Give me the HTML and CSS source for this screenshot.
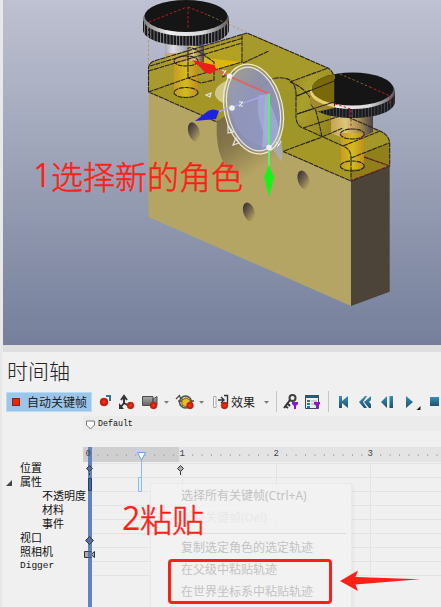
FILE: index.html
```
<!DOCTYPE html>
<html lang="zh-CN">
<head>
<meta charset="utf-8">
<title>时间轴</title>
<link rel="stylesheet" href="styles.css">
</head>
<body>
<div class="app">
<main class="viewport">
<svg class="scene" width="438" height="345" viewBox="3 0 438 345">
<defs>
<linearGradient id="sky" x2="0" y2="1"><stop stop-color="#bec1d1"/><stop offset=".35" stop-color="#a5abbe"/><stop offset="1" stop-color="#757f9b"/></linearGradient>
<linearGradient id="metal"><stop stop-color="#aaa9b1"/><stop offset=".2" stop-color="#dedee2"/><stop offset=".65" stop-color="#9695a3"/><stop offset=".8" stop-color="#303650"/><stop offset="1" stop-color="#65678a"/></linearGradient>
<linearGradient id="brass"><stop stop-color="#c2a550"/><stop offset=".35" stop-color="#dcc678"/><stop offset=".7" stop-color="#a2874d"/><stop offset="1" stop-color="#46414d"/></linearGradient>
<linearGradient id="pin"><stop stop-color="#c99c1c"/><stop offset=".5" stop-color="#d2bb20"/><stop offset="1" stop-color="#c18d1c"/></linearGradient>
<linearGradient id="bore" x1="0" y1="0" x2=".55" y2="1"><stop stop-color="#746846"/><stop offset=".45" stop-color="#85754a"/><stop offset=".9" stop-color="#b5a564"/></linearGradient>
<linearGradient id="hole" x1=".2" y1=".1" x2=".6" y2="1"><stop stop-color="#3d3635"/><stop offset=".45" stop-color="#70634b"/><stop offset="1" stop-color="#b9a966"/></linearGradient>
<linearGradient id="glass" x1="0" y1="0" x2=".7" y2="1"><stop stop-color="#aaa889"/><stop offset=".45" stop-color="#8d90b3"/><stop offset="1" stop-color="#8c94c7"/></linearGradient>
<linearGradient id="fold" x2="1" y2=".5"><stop stop-color="#98891c"/><stop offset=".35" stop-color="#aaa12c"/><stop offset="1" stop-color="#90821a"/></linearGradient>
<linearGradient id="rim"><stop stop-color="#77777c"/><stop offset=".3" stop-color="#f0f0f1"/><stop offset=".7" stop-color="#d9d9dc"/><stop offset="1" stop-color="#555"/></linearGradient>
<pattern id="knurl" width="3.2" height="20" patternUnits="userSpaceOnUse"><rect width="3.2" height="20" fill="#17171a"/><rect width=".9" height="20" fill="#85858a"/></pattern>
<pattern id="knurl-dark" width="3.2" height="20" patternUnits="userSpaceOnUse"><rect width="3.2" height="20" fill="#1b1c20"/><rect width=".8" height="20" fill="#4b4c52"/></pattern>
<clipPath id="behind"><path d="M300 60H334.5V108Q315 112 300 116Z"/></clipPath>
</defs>
<rect x="3" width="438" height="345" fill="url(#sky)"/>
<path d="M148.5 91L220 116 283 144 351 180V306L148.5 217Z" fill="#b5a564"/>
<path d="M351 180L389.7 165V291.7L351 306Z" fill="#4c4339"/>
<path d="M165 40H204V65Q185 72 165 64Z" fill="url(#metal)"/>
<path d="M148.5 92V68Q149 63 154 61L247 33 260 38 327 68Q334 71 334.5 80V108L380 131Q389.5 135 389.7 143V166L351 181 283 151.5 217 122Z" fill="#a49628"/>
<path d="M148.5 92V68Q149 63 154 61L192 49 215 60V80L188 78Z" fill="#a89a2c"/>
<path d="M247 33L260 38 328 68 293 82Q289 78 283 78L235 61 204 53Z" fill="#a69a2b"/>
<path d="M204 49L243 37V62L212 72Z" fill="#b3a222"/>
<path d="M204 58L242 62 216 70 204 69Z" fill="#dcb80c"/>
<path d="M293 82L328 68Q334 72 334.5 80V108L343 124 322 137 296 118Z" fill="url(#fold)"/>
<path d="M148.5 92L188 78 217 83 245 91 217 122Z" fill="#a49527"/>
<path d="M296 110Q296 124 303 128L322 137 283 151.5 277 118V88L296 93Z" fill="#9f9628"/>
<path d="M322 137L343 146 351 158V181L283 151.5Z" fill="#a69827"/>
<path d="M351 158L389.7 143V166L351 181Z" fill="#91801a"/>
<path d="M165 53H204V58Q203 64 186 65Q169 64 165 57Z" fill="#cba843" opacity=".75"/>
<path d="M188 46H204V62L188 65Z" fill="url(#brass)"/>
<path d="M174 61H198V92A12 5 0 0 1 174 92Z" fill="url(#pin)"/>
<path d="M331 112H373V132Q352 144 331 133Z" fill="url(#brass)"/>
<path d="M341 133H364V166A12 5 0 0 1 341 166Z" fill="url(#pin)"/>
<g fill="none" stroke="#28232c" stroke-width="1.1" stroke-dasharray="5 .7">
<path d="M148.5 92V68Q149 63 154 61L247 33 328 68Q334 72 334.5 80V108"/>
<path d="M150 66L243 38M148.5 71L242 43M148.5 92L188 78 242 62V34M148.5 92L217 122 245 112M188 78V48Q192 47 198 51L214 62V80L201 83 188 78M222 77L240 70M243 63L269 51"/>
<path d="M260 88Q272 76 283 78Q295 79 296 93V118Q297 126 303 128L343 146Q351 149 351 158V181L389.7 166V143Q389 135 380 131L343 115M290 82Q307 88 314 105Q318 117 322 137L283 151.5 351 181M296 96L334 81M297 114L334 102M290 82L328 68M303 128L343 115M322 137L343 128M343 146L380 131M351 158L389 143M364 157L390 166"/>
<ellipse cx="186" cy="61" rx="12" ry="5"/><ellipse cx="186" cy="92.5" rx="12" ry="5"/><ellipse cx="352.3" cy="134" rx="12" ry="5"/><ellipse cx="352.3" cy="166" rx="12" ry="5"/>
</g>
<path d="M143 20V31C148 50 224 51 229 31V20Z" fill="url(#knurl)"/>
<ellipse cx="186" cy="19" rx="43" ry="17" fill="url(#rim)"/><ellipse cx="186" cy="16" rx="41.5" ry="16" fill="#151515"/>
<path d="M310 92V103C315 123 390 123 395 103V92Z" fill="url(#knurl-dark)"/>
<ellipse cx="352.5" cy="91.5" rx="42.5" ry="17.5" fill="url(#rim)"/><ellipse cx="352.5" cy="89" rx="41" ry="16.5" fill="#151515"/>
<g clip-path="url(#behind)"><path d="M310 92V103Q320 118 340 119V80Z" fill="#a38a32"/><ellipse cx="352.5" cy="91.5" rx="42.5" ry="17.5" fill="#e8d06c"/><ellipse cx="352.5" cy="89" rx="41" ry="16.5" fill="#796909"/></g>
<path d="M334.5 79V106M297 96L334 81M297 114L334 102" fill="none" stroke="#28232c"/>
<g fill="none" stroke-dasharray="2.5 2"><path d="M149 22L187 7M188 7V29M188 7L208 15" stroke="#b81d1d"/><path d="M148.5 22V66M208 15L246 32M340 74L370 87" stroke="#b8824e" opacity=".65"/><path d="M370 87L390 96V105M335 104L351 109V116" stroke="#ca1a21"/><path d="M351 110V130M351 180L389 166 366 157" stroke="#a82a2c"/></g>
<path d="M217 121C214 160 230 184 260 184Q273 184 282 160L283 151 245 104Z" fill="url(#bore)"/>
<g fill="url(#hole)"><ellipse cx="194" cy="132" rx="5.6" ry="10" transform="rotate(-18 194 132)"/><ellipse cx="249" cy="212" rx="5.6" ry="9.7" transform="rotate(-18 249 212)"/><ellipse cx="303.5" cy="180" rx="5.6" ry="9.7" transform="rotate(-18 303.5 180)"/></g>
<path d="M229 80Q214 85 215 95Q217 102 227 104Z" fill="#d1c78b"/>
<ellipse cx="253.5" cy="109" rx="28" ry="44" transform="rotate(-13 253.5 109)" fill="url(#glass)" fill-opacity=".93"/>
<path d="M229 80L269 94V147Q239 145 231 112Z" fill="#949bc4" opacity=".55"/>
<path d="M259 95Q252 125 282 162V145Q279 119 266 95Z" fill="#a3b4dc" opacity=".6"/>
<path d="M265 97L269 94V146L262 148Z" fill="#aab2df" opacity=".7"/>
<g fill="none" stroke="#eee9c6"><ellipse cx="253.5" cy="109" rx="29" ry="45.5" transform="rotate(-13 253.5 109)" stroke-width="1.3"/><ellipse cx="253.5" cy="109" rx="26" ry="42.5" transform="rotate(-13 253.5 109)" stroke-width="1.2"/></g>
<path d="M206 95L211 93 210 97ZM228 126V133L233 132ZM236 138L233 145 239 143Z" fill="none" stroke="#e2e2e8" stroke-width="1.2"/>
<path d="M269 94L211 68" stroke="#ed5b62" stroke-width="1.7"/><path d="M192 60L214 65 217 70 210 74Q204 73 201 68Z" fill="#ed2018"/>
<path d="M269 94L215 113" stroke="#a9a5ec" stroke-width="1.5"/><path d="M195 121L208 111Q213 108 219 111L216 119Z" fill="#2020df"/>
<path d="M269 94V180" stroke="#54f463" stroke-width="2"/><path d="M269 165L274 177 269 197 264 177Z" fill="#18f219"/>
<g fill="#eeeef6"><circle cx="229.5" cy="76" r="2.7"/><circle cx="232" cy="108" r="2.8"/><circle cx="269" cy="147.5" r="2.8"/></g>
<path d="M222 70L226 72M226 70L223 75M239 102H243L239 106H243M276 142L279 145 281 141M279 145L277 147" stroke="#eee" fill="none"/>
</svg>
<p class="note note-select"><span class="digit">1</span>选择新的角色</p>
</main>
<section class="timeline">
<h1>时间轴</h1>
<div class="toolbar">
<button class="auto"><i></i>自动关键帧</button>
<svg class="tools" width="140" height="22" viewBox="93 391 140 22">
<defs><radialGradient id="dot"><stop stop-color="#ff351b"/><stop offset="1" stop-color="#b61200"/></radialGradient><linearGradient id="camera" x2="0" y2="1"><stop stop-color="#aaa"/><stop offset="1" stop-color="#636363"/></linearGradient></defs>
<path d="M106 396H110V401" fill="none" stroke="#2f7797" stroke-width="2"/>
<path d="M124 404V397M121 400L124 396 127 400M124 403L131 407M124 403L120 408" stroke="#343434" stroke-width="2" fill="none"/><path d="M119 403V409H124Z" fill="#343434"/>
<path d="M142.5 396.5H153V405.5H142.5ZM153 399L157 396.5V405H153Z" fill="url(#camera)" stroke="#4d4d4d"/>
<circle cx="185.5" cy="402" r="6" fill="#d8d1a8" stroke="#505050" stroke-width="1.5"/><path d="M180 395L176 399M178 401H194M179 396L190 407" stroke="#4c4c4c" stroke-width="1.3"/><path d="M182 400L186 398 190 400V405L186 407 182 405Z" fill="#eabd19" stroke="#786525"/>
<path d="M213.5 396.5H216V407.5H213.5Z" fill="#fff" stroke="#aaa"/><path d="M218 400H224M221 397L224 400 221 403M224 395.5H227.5V404" fill="none" stroke="#333" stroke-width="1.4"/>
<g fill="url(#dot)" stroke="#b72a16" stroke-width=".5"><circle cx="104" cy="402" r="4"/><circle cx="130.5" cy="405.5" r="3.4"/><circle cx="153.5" cy="405.5" r="3.4"/><circle cx="190" cy="405.5" r="3.4"/><circle cx="224.5" cy="405.5" r="3.4"/></g>
<path d="M164 401H169L166.5 403.8ZM199 401H204L201.5 403.8Z" fill="#777"/>
</svg>
<span class="effect">效果</span>
<svg class="tools" width="180" height="22" viewBox="261 391 180 22">
<defs><linearGradient id="play" x2="0" y2="1"><stop stop-color="#398fbb"/><stop offset="1" stop-color="#1b516b"/></linearGradient></defs>
<path d="M264 401H269L266.5 403.8Z" fill="#777"/><path d="M276.5 391V412M328.5 391V412" stroke="#c5c5c5"/>
<circle cx="292.5" cy="398" r="3" fill="none" stroke="#414141" stroke-width="2"/><path d="M290 400L284 408M287 403L290 406M285 406L288 408" stroke="#333" stroke-width="2"/>
<path d="M305.5 396H318.5V408.5H305.5Z" fill="#eee" stroke="#3d4a53"/><path d="M305 395H319V398H305Z" fill="#195e83"/><path d="M307 401H310M307 404H310M307 407H310" stroke="#26769b" stroke-width="2"/><path d="M311 401H317M311 404H316" stroke="#aaa"/>
<path d="M292 402H298V404L296 406V409H294V406L292 404ZM314 402H320V404L318 406V409H316V406L314 404Z" fill="#8e15d5"/>
<g fill="url(#play)"><path d="M339 396H342V401L348 396V408L342 403V408H339Z"/><path d="M365 396H367L363 402 367 408H364L359 402ZM371 396V400L369 402 371 404V408H369L364 402Z"/><path d="M387 396V408L381 402ZM389.5 396H393V408H389.5Z"/><path d="M406 396L413 402 406 408Z"/><path d="M430 397H439V406H430Z"/></g><path d="M420.5 406V410H416.5Z" fill="#222"/>
</svg>
</div>
<div class="track"><svg width="10" height="10"><path d="M.5 1H8.5V5L4.5 9 .5 5Z" fill="#fff" stroke="#777"/></svg><span>Default</span></div>
<div class="body">
<ul class="labels"><li>位置</li><li class="group"><svg width="7" height="7"><path d="M6 0V6H0Z" fill="#444"/></svg>属性</li><li class="child">不透明度</li><li class="child">材料</li><li class="child">事件</li><li>视口</li><li>照相机</li><li class="latin">Digger</li></ul>
<div class="chart">
<svg width="358" height="160" viewBox="83 447 358 160">
<path d="M83 447H441V462H83Z" fill="#e4e4e4"/><path d="M83 447H179V462H83Z" fill="#cfcfcf"/>
<path d="M97.7 455.2H179M192.2 455.2H272M286.2 455.2H366M380.2 455.2H441" stroke="#a5a5a5" stroke-width="1.8" stroke-dasharray="1 8.4"/>
<path d="M92 463.5H441M92 477.5H441M92 491.5H441M92 505.5H441M92 519.5H441M92 533.5H441M92 547.5H441M92 561.5H441M92 575.5H441M182.5 463V575M276.5 463V575M370.5 463V575" stroke="#e4e4e4"/>
<path d="M88 447H92V607H88Z" fill="#6283bd"/>
<g class="ticks"><text x="85.5" y="456">0</text><text x="179.5" y="456">1</text><text x="273.5" y="456">2</text><text x="367.5" y="456">3</text></g>
<path d="M89.5 473V475M180.5 471V475" stroke="#333"/><g stroke="#383838"><path d="M89.5 465.5L92.5 468.5 89.5 471.5 86.5 468.5Z" fill="#536f9f"/><path d="M180.5 465.5L183.5 468.5 180.5 471.5 177.5 468.5Z" fill="#aaa"/><path d="M89.5 536.5L93.5 540.5 89.5 544.5 85.5 540.5Z" fill="#536f9f"/></g>
<path d="M88.5 478.5H91.5V490.5H88.5Z" fill="#456ba9" stroke="#263f6a"/>
<path d="M84.5 551.5H91.5V557.5H84.5ZM91 554.5L94.5 551.5V557.5Z" fill="#aaa" stroke="#333"/><path d="M88 551.5H92V557.5H88Z" fill="#587bb6"/>
<path d="M141.5 460V477" stroke="#8cbcea"/><path d="M138.5 477.5H141.5V491.5H138.5Z" fill="#e3effb" stroke="#8cbcea"/><path d="M137.5 452.5H145.5L141.5 460Z" fill="#fff" stroke="#62a4e5"/>
</svg>
<div class="menu"><span>选择所有关键帧(Ctrl+A)</span><span class="disabled">所有关键帧(Del)</span><hr><span>复制选定角色的选定轨迹</span><span>在父级中粘贴轨迹</span><span>在世界坐标系中粘贴轨迹</span></div>
</div>
</div>
</section>
<p class="note note-paste"><span class="digit">2</span>粘贴</p>
<div class="highlight"></div>
<svg class="arrow" width="82" height="24" viewBox="339 569 82 24"><path d="M340 581L358 570.5 355.5 577 420 579.3 355.5 584.5 358 591Z" fill="#fc2116"/></svg>
</div>
</body>
</html>
```
FILE: styles.css
```
* { box-sizing: border-box; }
body { margin: 0; font-family: "Liberation Sans", "Noto Sans CJK SC", sans-serif; color: #222; }
p, h1, ul { margin: 0; padding: 0; }
svg { display: block; flex: none; }
.app { position: relative; width: 441px; height: 607px; overflow: hidden; background: #f0f0f0; display: flex; flex-direction: column; }
.viewport { height: 352px; border-left: 3px solid #e8e8e8; background: #dedede; flex: none; }
.timeline { border-left: 2px solid #e7e7e7; height: 255px; }
.timeline h1 { font: 300 21px/36px "Noto Sans CJK SC", sans-serif; height: 39px; padding-left: 5px; color: #222; }
.toolbar { display: flex; height: 22px; padding-left: 4px; align-items: center; white-space: nowrap; }
.auto { width: 86px; height: 20px; margin: 0; padding: 0 0 0 5px; border: 1px solid #b9dcf6; background: #9bc5e9; display: flex; align-items: center; gap: 7px; font: 12px/18px "Noto Sans CJK SC", sans-serif; color: #222; white-space: nowrap; }
.auto i { width: 8px; height: 8px; background: #e22c08; border: 1px solid #9c1a0c; flex: none; }
.toolbar .tools:first-of-type { margin-left: 1px; }
.effect { width: 28px; padding-left: 0; margin-left: -2px; margin-right: 2px; font: 12px/20px "Noto Sans CJK SC", sans-serif; }
.track { margin: 3px 0 0 81px; height: 15px; background: #ebebeb; display: flex; align-items: center; padding-left: 3px; gap: 2px; font: 8.3px/12px "Liberation Mono", monospace; color: #111; }
.track svg { margin-top: 3px; }
.body { display: flex; margin-top: 16px; height: 160px; }
.labels { width: 81px; padding: 13px 0 0; list-style: none; font: 11px/14px "Noto Sans CJK SC", sans-serif; color: #111; flex: none; }
.labels li { height: 14px; padding-left: 18px; white-space: nowrap; }
.labels .child { padding-left: 40px; }
.labels .group { display: flex; padding-left: 4px; gap: 7px; }
.labels .group svg { margin-top: 6px; }
.labels .latin { font-family: "Liberation Mono", monospace; font-size: 9.5px; line-height: 16px; }
.chart { position: relative; width: 358px; flex: none; }
.ticks { font: 9px "Liberation Mono", monospace; fill: #444; }
.menu { position: absolute; left: 67px; top: 36px; width: 202px; height: 130px; padding-top: 1px; border: 1px solid #e9e9e9; background: #f2f2f2d9; box-shadow: 2px 2px 3px #0000000a; display: flex; flex-direction: column; font: 12px/22px "Noto Sans", "Noto Sans CJK SC", sans-serif; color: #c3c3c3; }
.menu span { padding-left: 30px; height: 22px; white-space: nowrap; }
.menu .disabled { color: #e8e8e8; }
.menu hr { width: 195px; height: 1px; border: 0; background: #dddddd; margin: 4px 0 3px; }
.note { position: absolute; color: #fc2116; white-space: nowrap; font: 300 32px/40px "Noto Sans CJK SC", sans-serif; -webkit-text-stroke: .5px #fc2116; display: flex; }
.digit { font-family: "Open Sans", sans-serif; font-weight: 400; width: 18px; -webkit-text-stroke: 0; }
.note-select { left: 33px; top: 155px; }
.note-paste { left: 122px; top: 498px; }
.highlight { position: absolute; left: 168px; top: 559px; width: 164px; height: 45px; border: 3px solid #fc2116; border-radius: 4px; }
.arrow { position: absolute; left: 339px; top: 569px; }
```
